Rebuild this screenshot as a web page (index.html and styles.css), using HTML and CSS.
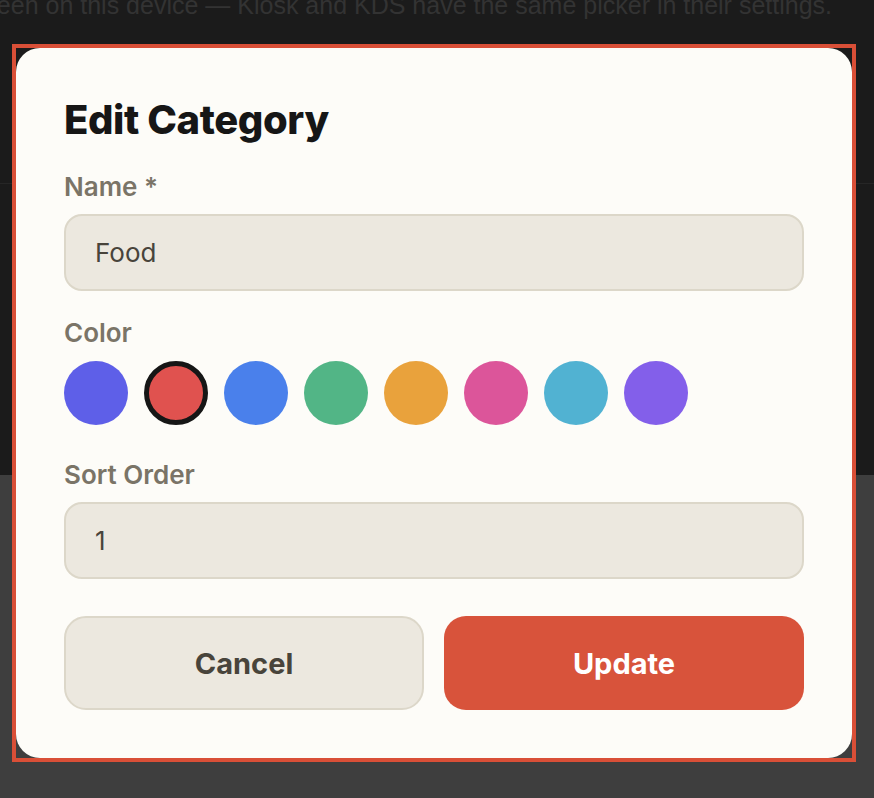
FILE: index.html
```html
<!DOCTYPE html>
<html lang="en">
<head>
<meta charset="utf-8">
<title>Edit Category</title>
<link rel="stylesheet" href="styles.css">
</head>
<body>
<div class="page">
  <div class="backdrop-top">
    <div class="hint-row">
      <p class="hint">Theme is seen on this device — Kiosk and KDS have the same picker in their settings.</p>
    </div>
    <div class="rule"></div>
  </div>
  <div class="backdrop-bottom"></div>

  <div class="modal-frame">
    <form class="card">
      <h1 class="title">Edit Category</h1>

      <div class="field">
        <label class="label">Name *</label>
        <div class="input">Food</div>
      </div>

      <div class="field">
        <label class="label">Color</label>
        <div class="swatches">
          <span class="swatch c-indigo"></span>
          <span class="swatch c-red selected"></span>
          <span class="swatch c-blue"></span>
          <span class="swatch c-green"></span>
          <span class="swatch c-orange"></span>
          <span class="swatch c-pink"></span>
          <span class="swatch c-cyan"></span>
          <span class="swatch c-purple"></span>
        </div>
      </div>

      <div class="field field-sort">
        <label class="label">Sort Order</label>
        <div class="input">1</div>
      </div>

      <div class="actions">
        <button type="button" class="btn btn-cancel">Cancel</button>
        <button type="button" class="btn btn-update">Update</button>
      </div>
    </form>
  </div>
</div>
</body>
</html>
```

FILE: styles.css
```css
* { box-sizing: border-box; }

html, body {
  margin: 0;
  padding: 0;
  width: 874px;
  height: 798px;
  overflow: hidden;
  font-family: Inter, "Noto Sans", "Liberation Sans", sans-serif;
}

.page {
  position: relative;
  width: 874px;
  height: 798px;
  display: flex;
  flex-direction: column;
  background: #3e3e3e;
}

.backdrop-top {
  height: 475px;
  background: #1b1b1b;
  overflow: hidden;
  position: relative;
}

.hint-row {
  width: 832px;
  display: flex;
  justify-content: flex-end;
  margin-top: -10px;
}

.hint {
  margin: 0;
  flex: none;
  font-family: "Liberation Sans", Arial, sans-serif;
  font-size: 25px;
  line-height: 30px;
  color: #333333;
  white-space: nowrap;
}

.rule {
  margin-top: 163px;
  height: 1px;
  background: #262626;
}

.backdrop-bottom {
  flex: 1;
  background: #3e3e3e;
}

.modal-frame {
  position: absolute;
  left: 12px;
  top: 44px;
  width: 844px;
  height: 718px;
  border: 4px solid #d94f37;
}

.card {
  width: 836px;
  height: 710px;
  background: #fdfcf8;
  border-radius: 24px;
  padding: 48px;
  display: flex;
  flex-direction: column;
}

.title {
  margin: 0 0 27px 0;
  font-size: 40px;
  line-height: 48px;
  font-weight: 800;
  color: #161616;
  letter-spacing: -0.4px;
}

.field {
  display: flex;
  flex-direction: column;
  margin-bottom: 26px;
}

.field-sort {
  margin-bottom: 37px;
}

.label {
  font-size: 26px;
  line-height: 32px;
  font-weight: 600;
  color: #7a7467;
  margin-bottom: 11px;
}

.input {
  height: 77px;
  border: 2px solid #dcd7c9;
  background: #ece8df;
  border-radius: 18px;
  padding: 0 29px;
  display: flex;
  align-items: center;
  font-size: 26px;
  color: #48443b;
}

.swatches {
  display: flex;
  gap: 16px;
  margin-top: 1px;
  margin-bottom: 8px;
}

.swatch {
  width: 64px;
  height: 64px;
  border-radius: 50%;
  display: block;
}

.swatch.selected {
  border: 5px solid #161616;
}

.c-indigo { background: #5e5fe8; }
.c-red { background: #e0524f; }
.c-blue { background: #4a80eb; }
.c-green { background: #52b586; }
.c-orange { background: #e9a23c; }
.c-pink { background: #dc559a; }
.c-cyan { background: #51b2d2; }
.c-purple { background: #835fea; }

.actions {
  display: grid;
  grid-template-columns: 1fr 1fr;
  gap: 20px;
}

.btn {
  height: 94px;
  border-radius: 22px;
  font-family: Inter, "Noto Sans", "Liberation Sans", sans-serif;
  font-size: 29px;
  font-weight: 700;
  cursor: pointer;
}

.btn-cancel {
  background: #ece8df;
  border: 2px solid #dcd7c9;
  color: #48443b;
}

.btn-update {
  background: #d8533b;
  border: none;
  color: #ffffff;
}
```
